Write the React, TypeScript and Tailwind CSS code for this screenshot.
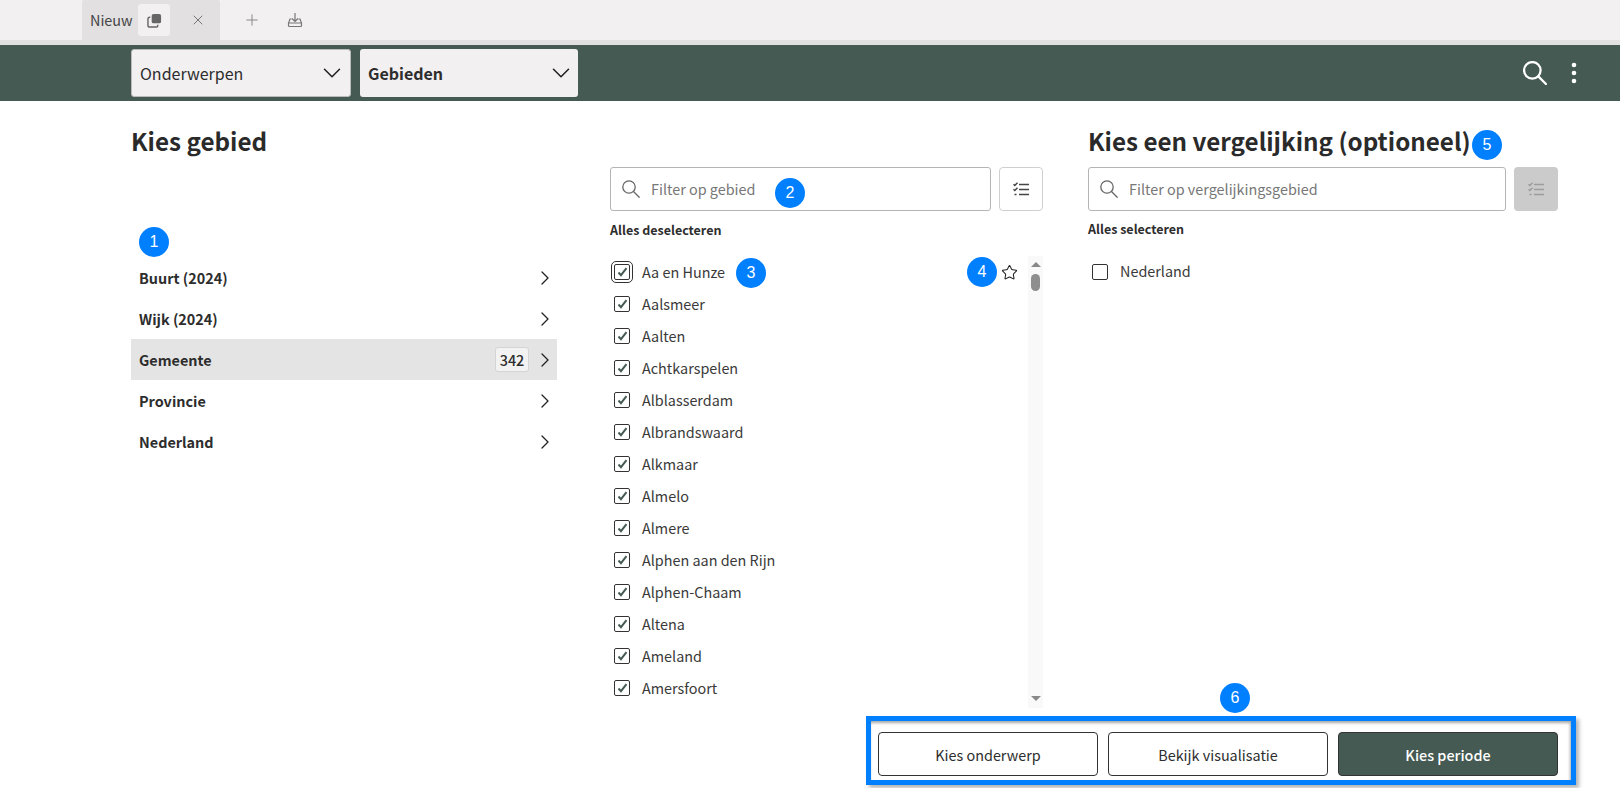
import React from "react";
import { ChevronDown, ChevronRight, Star, X, Plus } from "lucide-react";

const gemeenten = ["Aa en Hunze","Aalsmeer","Aalten","Achtkarspelen","Alblasserdam","Albrandswaard","Alkmaar","Almelo","Almere","Alphen aan den Rijn","Alphen-Chaam","Altena","Ameland","Amersfoort"];
const gebieden = ["Buurt (2024)","Wijk (2024)","Gemeente","Provincie","Nederland"];

function Marker({ n, className }: { n: number; className: string }) {
  return (
    <div className={"absolute w-[30px] h-[30px] rounded-full bg-[#007fff] text-white flex items-center justify-center text-[16px] leading-none font-['Liberation_Sans',sans-serif] " + className}>
      {n}
    </div>
  );
}

function Magnifier({ size, color, stroke, className }: { size: number; color: string; stroke: number; className?: string }) {
  return (
    <svg width={size} height={size} viewBox="0 0 18 18" fill="none" stroke={color} strokeWidth={stroke} strokeLinecap="round" className={className}>
      <circle cx="7" cy="7" r="6.200" />
      <path d="M11.500 11.500L17.200 17.200" />
    </svg>
  );
}

function ListCheck({ color }: { color: string }) {
  return (
    <svg width="16" height="14" viewBox="0 0 16 14" fill="none" stroke={color}>
      <path strokeWidth="1.500" d="M0.500 2.200l1.300 1.300L4.500 0.700M0.500 7.200l1.300 1.300L4.500 5.700" />
      <path strokeWidth="1.600" d="M6 2.500h10M6 7.500h10M6 12.500h10M1.500 12.500h2" />
    </svg>
  );
}

function Check({ focus }: { focus?: boolean }) {
  return (
    <span className={"relative shrink-0 w-4 h-4 rounded-[2px] border border-[#333] flex items-center justify-center bg-white " + (focus ? "outline outline-1 outline-offset-[2px] outline-[#333]" : "")}>
      <svg width="11" height="10" viewBox="0 0 11 10" fill="none" stroke="#445a52" strokeWidth="2">
        <path d="M1.500 5.500L4 8.200L9.500 1.200" />
      </svg>
    </span>
  );
}

function SearchField({ placeholder }: { placeholder: string }) {
  return (
    <div className="flex-1 h-11 rounded-[3px] border border-[#b5b5b5] flex items-center pl-[11px] gap-[11px] bg-white">
      <Magnifier size={18} color="#666" stroke={1.300} className="shrink-0" />
      <span className="text-[14.4px] leading-5 text-[#777]">{placeholder}</span>
    </div>
  );
}

function TopSelect({ label, bold, className }: { label: string; bold?: boolean; className: string }) {
  return (
    <div className={"h-12 rounded-[3px] bg-[#f2f0f1] flex items-center justify-between text-[16px] leading-6 text-[#2d2d2d] " + (bold ? "font-bold " : "") + className}>
      <span>{label}</span>
      <ChevronDown size={30} strokeWidth={1.250} className="text-[#222]" />
    </div>
  );
}

export default function App() {
  return (
    <div className="relative w-[1620px] h-[788px] overflow-hidden bg-white flex flex-col text-[#2d2d2d] font-['Noto_Sans_CJK_JP',sans-serif]">
      {/* tab bar */}
      <div className="h-[40px] bg-[#f2f0f1] flex items-stretch pl-[82px] shrink-0">
        <div className="w-[138px] bg-[#e2e0e1] rounded-t-[2px] flex items-center pl-2 text-[14.4px] text-[#444]">
          <span className="w-[43px] shrink-0">Nieuw</span>
          <span className="ml-[5px] w-8 h-8 rounded-[3px] bg-[#f2f0f1] flex items-center justify-center">
            <svg width="15" height="15" viewBox="0 0 16 16" fill="none">
              <rect x="5" y="1" width="10" height="10" rx="2" fill="#666" />
              <path d="M3.500 4.500H3a2 2 0 0 0-2 2V13a2 2 0 0 0 2 2h6.500a2 2 0 0 0 2-2v-.5" stroke="#666" strokeWidth="1.500" />
            </svg>
          </span>
          <X size={16} strokeWidth={1.300} className="ml-[20px] text-[#666]" />
        </div>
        <Plus size={18} strokeWidth={1.300} className="ml-[23px] self-center text-[#888]" />
        <svg className="ml-[26px] self-center" width="16" height="16" viewBox="0 0 16 16" fill="none" stroke="#777" strokeWidth="1.200">
          <path d="M8 1v8M5 6.500L8 9.500l3-3M4.500 7H3L1.500 11v2.500a1 1 0 0 0 1 1h11a1 1 0 0 0 1-1V11L13 7h-1.500M1.500 11h13" />
        </svg>
      </div>
      <div className="h-[5px] bg-[#e2e0e1] shrink-0" />
      {/* header */}
      <div className="h-[56px] bg-[#445a52] flex items-center pl-[131px] pr-[43px] shrink-0">
        <TopSelect label="Onderwerpen" className="w-[220px] pl-2 pr-[3px] border border-[#bbb]" />
        <TopSelect label="Gebieden" bold className="ml-[9px] w-[218px] pl-2 pr-[2px]" />
        <Magnifier size={24} color="white" stroke={1.700} className="ml-auto" />
        <svg className="ml-[24px]" width="6" height="22" viewBox="0 0 6 22" fill="white">
          <circle cx="3" cy="3" r="2.300" /><circle cx="3" cy="11" r="2.300" /><circle cx="3" cy="19" r="2.300" />
        </svg>
      </div>
      {/* main */}
      <div className="flex-1 min-h-0 flex pl-[131px] pr-[62px]">
        <div className="w-[426px] shrink-0 flex flex-col">
          <h1 className="mt-6 text-[24.2px] leading-8 font-bold text-[#2a2a2a]">Kies gebied</h1>
          <div className="mt-[100px]">
            {gebieden.map((g) => (
              <div key={g} className={"h-[41px] flex items-center pl-2 text-[14.4px] font-bold " + (g === "Gemeente" ? "bg-[#e4e4e4]" : "")}>
                <span className="flex-1">{g}</span>
                {g === "Gemeente" && (
                  <span className="mr-1 w-[34px] h-[25px] rounded-[3px] border border-[#d4d4d4] bg-[#f2f2f2] flex items-center justify-center text-[14.4px] font-medium">342</span>
                )}
                <ChevronRight size={24} strokeWidth={1.300} className="text-[#222]" />
              </div>
            ))}
          </div>
        </div>
        <div className="ml-[53px] w-[433px] shrink-0 flex flex-col min-h-0 pt-[66px]">
          <div className="flex gap-2 shrink-0">
            <SearchField placeholder="Filter op gebied" />
            <div className="w-11 h-11 rounded-[4px] border border-[#cfcfcf] flex items-center justify-center"><ListCheck color="#444" /></div>
          </div>
          <div className="mt-[11px] text-[12.5px] leading-4 font-semibold">Alles deselecteren</div>
          <div className="mt-[18px] flex h-[452px] min-h-0">
            <div className="flex-1">
              {gemeenten.map((g, i) => (
                <div key={g} className="h-8 flex items-center pl-1 gap-3 text-[14.4px] text-[#3a3a3a]">
                  <Check focus={i === 0} />
                  <span className="flex-1 pb-[1px]">{g}</span>
                  {i === 0 && <Star size={17} strokeWidth={1.500} className="mr-[10px] text-[#222]" />}
                </div>
              ))}
            </div>
            <div className="w-[15px] bg-[#f9f9f9] flex flex-col items-center pt-[6px] pb-[7px]">
              <span className="w-0 h-0 border-x-[5px] border-x-transparent border-b-[5px] border-b-[#888]" />
              <span className="mt-[7px] w-[9px] h-[17px] rounded-full bg-[#8e8e8e]" />
              <span className="mt-auto w-0 h-0 border-x-[5px] border-x-transparent border-t-[5px] border-t-[#888]" />
            </div>
          </div>
        </div>
        <div className="ml-[45px] flex-1 flex flex-col">
          <h1 className="mt-6 text-[24.2px] leading-8 font-bold text-[#2a2a2a]">Kies een vergelijking (optioneel)</h1>
          <div className="mt-[10px] flex gap-2">
            <SearchField placeholder="Filter op vergelijkingsgebied" />
            <div className="w-11 h-11 rounded-[4px] bg-[#cbcbcb] flex items-center justify-center"><ListCheck color="#9c9c9c" /></div>
          </div>
          <div className="mt-[10px] text-[12.5px] leading-4 font-semibold">Alles selecteren</div>
          <div className="mt-[19px] h-8 flex items-center pl-1 gap-3 text-[14.4px] text-[#3a3a3a]">
            <span className="w-4 h-4 rounded-[2px] border border-[#333]" />
            <span className="pb-[2px]">Nederland</span>
          </div>
        </div>
      </div>
      {/* footer */}
      <div className="h-[72px] shrink-0 flex justify-end pr-[44px] items-start">
        <div className="w-[710px] h-[69px] border-[5px] border-[#007fff] shadow-[3px_3px_4px_rgba(0,0,0,0.3),inset_-1px_2px_3px_rgba(0,0,0,0.35)] flex items-start pt-[11px] pl-[7px] gap-[10px] bg-white text-[14.4px]">
          <div className="w-[220px] h-11 pt-[2px] rounded-[4px] border border-[#333] flex items-center justify-center">Kies onderwerp</div>
          <div className="w-[220px] h-11 pt-[2px] rounded-[4px] border border-[#333] flex items-center justify-center">Bekijk visualisatie</div>
          <div className="w-[220px] h-11 pt-[2px] rounded-[4px] border border-[#333] bg-[#445a52] text-white flex items-center justify-center font-medium">Kies periode</div>
        </div>
      </div>
      <Marker n={1} className="left-[139px] top-[227px]" />
      <Marker n={2} className="left-[775px] top-[178px]" />
      <Marker n={3} className="left-[736px] top-[258px]" />
      <Marker n={4} className="left-[967px] top-[257px]" />
      <Marker n={5} className="left-[1472px] top-[130px]" />
      <Marker n={6} className="left-[1220px] top-[683px]" />
    </div>
  );
}
